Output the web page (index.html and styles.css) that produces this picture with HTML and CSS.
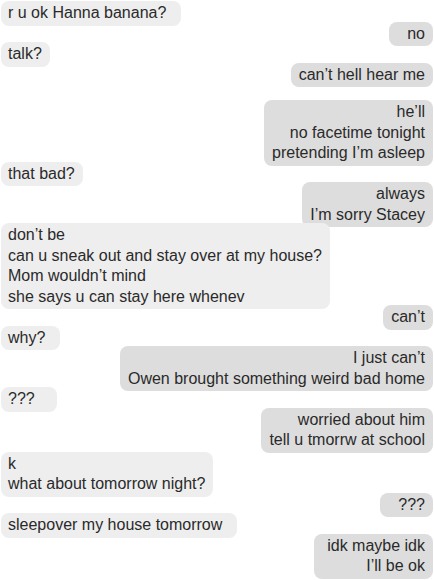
FILE: index.html
```html
<!DOCTYPE html>
<html lang="en">
<head>
  <meta charset="UTF-8" />
  <meta name="viewport" content="width=device-width, initial-scale=1.0"/>
  <title>Messages</title>
  <link rel="stylesheet" href="styles.css">
</head>
<body>

<div class="thread">
  <div class="msg them pad-s">r u ok Hanna banana?</div>
  <div class="msg me pad-m">no</div>
  <div class="msg them">talk?</div>
  <div class="msg me">can’t hell hear me</div>
  <div class="msg me follow">he’ll<br>no facetime tonight<br>pretending I’m asleep</div>
  <div class="msg them">that bad?</div>
  <div class="msg me">always<br>I’m sorry Stacey</div>
  <div class="msg them">don’t be<br>can u sneak out and stay over at my house?<br>Mom wouldn’t mind<br>she says u can stay here whenev</div>
  <div class="msg me">can’t</div>
  <div class="msg them pad-s">why?</div>
  <div class="msg me">I just can’t<br>Owen brought something weird bad home</div>
  <div class="msg them pad-l">???</div>
  <div class="msg me">worried about him<br>tell u tmorrw at school</div>
  <div class="msg them loose">k<br>what about tomorrow night?</div>
  <div class="msg me pad-m">???</div>
  <div class="msg them pad-s">sleepover my house tomorrow</div>
  <div class="msg me pad-s">idk maybe idk<br>I’ll be ok</div>
</div>

</body>
</html>
```

FILE: styles.css
```css
body {
  margin: 0;
  background: #fff;
  font-family: "Liberation Sans", Arial, sans-serif;
  font-size: 16px;
  color: #2a2a2a;
}

.thread {
  display: flex;
  flex-direction: column;
  padding: 1px 1px 0 1px;
}

.msg {
  line-height: 20.5px;
  padding: 2px 8px 2px 7px;
  border-radius: 8px;
  margin-top: -4px;
}

.msg:first-child {
  margin-top: 0;
}

.them {
  align-self: flex-start;
  background: #eeeeee;
  text-align: left;
}

.me {
  align-self: flex-end;
  background: #dddddd;
  text-align: right;
  padding: 2px 8px 2px 8px;
}

/* extra room on the open side of a bubble */
.them.pad-s { padding-right: 15px; }
.them.pad-l { padding-right: 22px; }
.me.pad-s { padding-left: 13px; }
.me.pad-m { padding-left: 18px; }

.follow {
  margin-top: 13px;
}

.loose {
  margin-top: -1px;
}
```
